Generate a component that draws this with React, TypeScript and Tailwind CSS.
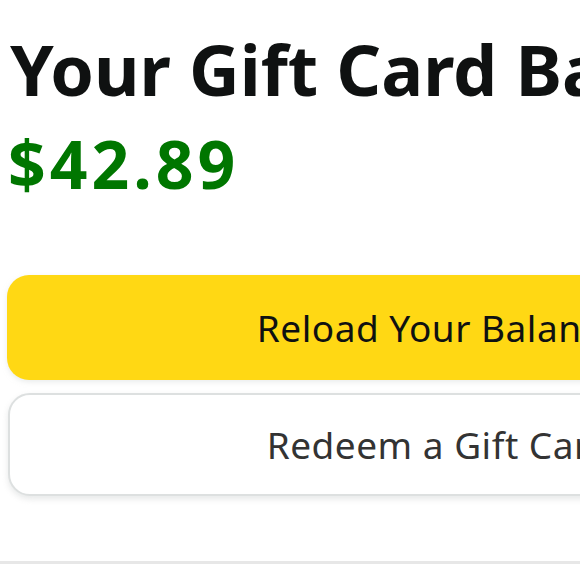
export default function App() {
  return (
    <div className="w-[580px] h-[580px] overflow-hidden bg-white" style={{ fontFamily: '"Noto Sans", "Open Sans", sans-serif' }}>
      <div className="w-[878px] pl-[8px] pr-[7px]">
        <h1 className="pt-[26px] pl-[2px] text-[70px] leading-[86px] font-bold text-[#0F1111] whitespace-nowrap">Your Gift Card Balance</h1>
        <div className="text-[66px] leading-[66px] font-bold tracking-[4px] text-[#007600] mt-[18px]">$42.89</div>
        <div className="mt-[79px] flex flex-col gap-[13px]">
          <div className="h-[105px] -ml-[1px] rounded-[22px] bg-[#FFD814] flex items-center justify-center text-[37px] tracking-[0.5px] text-[#0F1111] shadow-[0_2px_5px_rgba(213,217,217,0.5)]">Reload Your Balance</div>
          <div className="h-[103px] rounded-[22px] bg-white border-2 border-[#DDE0E0] flex items-center justify-center text-[37px] tracking-[0.5px] text-[#333] shadow-[0_3px_6px_rgba(213,217,217,0.6)]">Redeem a Gift Card</div>
        </div>
      </div>
      <div className="mt-[65px] h-[3px] bg-[#E7E7E7]" />
    </div>
  );
}
